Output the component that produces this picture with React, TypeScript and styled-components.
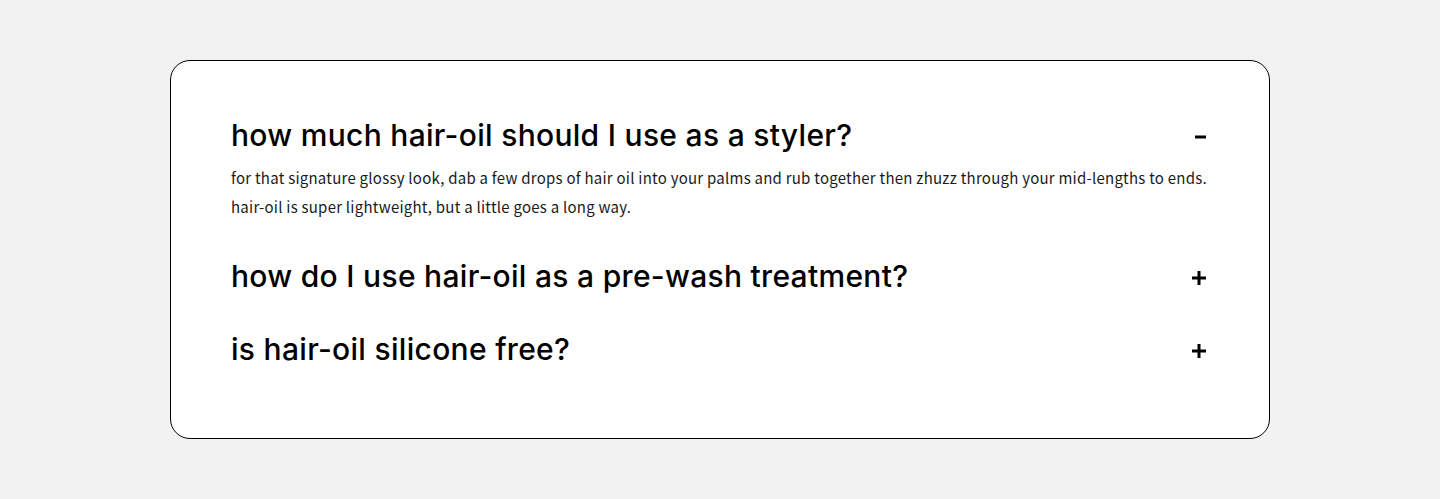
import React, { useState } from 'react';
import styled, { createGlobalStyle } from 'styled-components';

const GlobalStyle = createGlobalStyle`
    html, body {
        margin: 0;
        padding: 0;
        background: #f2f2f2;
    }
    body {
        font-family: "Noto Sans CJK JP", "Noto Sans", sans-serif;
        color: #000;
    }
`;

const Page = styled.div`
    padding: 60px 0 61px;
`;

const Card = styled.section`
    width: 1100px;
    box-sizing: border-box;
    margin: 0 auto;
    padding: 37.5px 60px 52px 60px;
    background: #fff;
    border: 1px solid #000;
    border-radius: 20px;
`;

const Item = styled.div`
    padding: 18.5px 0;
`;

const Question = styled.button`
    display: flex;
    align-items: center;
    justify-content: space-between;
    width: 100%;
    padding: 0;
    margin: 0;
    border: none;
    background: none;
    cursor: pointer;
    text-align: left;
    color: #000;
`;

const QuestionText = styled.h3`
    margin: 0;
    font-family: "Inter", "Lato", sans-serif;
    font-size: 30px;
    font-weight: 500;
    line-height: 36px;
    letter-spacing: 0.3px;
`;

const Toggle = styled.span`
    display: flex;
    align-items: center;
    justify-content: center;
    width: 16px;
    height: 16px;
    margin-right: 2px;
    margin-top: 4px;
`;

const Answer = styled.p`
    margin: 10px 0 0;
    font-size: 15px;
    line-height: 29px;
    letter-spacing: 0.24px;
    color: #1a1a1a;
`;

const faqs = [
    {
        q: 'how much hair-oil should I use as a styler?',
        a: (
            <>
                for that signature glossy look, dab a few drops of hair oil into your palms and rub together then zhuzz through your mid-lengths to ends.
                <br />
                hair-oil is super lightweight, but a little goes a long way.
            </>
        ),
    },
    {
        q: 'how do I use hair-oil as a pre-wash treatment?',
        a: 'apply a generous amount to dry hair from roots to ends, leave for at least 30 minutes, then shampoo and condition as usual.',
    },
    {
        q: 'is hair-oil silicone free?',
        a: 'yes, hair-oil is completely silicone free.',
    },
];

const Icon = ({ open }: { open: boolean }) => (
    <svg width="14" height="14" viewBox="0 0 14 14">
        {open ? (
            <rect x="3" y="5.5" width="11" height="3" fill="#000" />
        ) : (
            <>
                <rect x="0" y="5.5" width="14" height="3" fill="#000" />
                <rect x="5.5" y="0" width="3" height="14" fill="#000" />
            </>
        )}
    </svg>
);

const App: React.FC = () => {
    const [openIndex, setOpenIndex] = useState<number | null>(0);

    return (
        <>
            <GlobalStyle />
            <Page>
                <Card>
                    {faqs.map((f, i) => (
                        <Item key={i}>
                            <Question onClick={() => setOpenIndex(openIndex === i ? null : i)}>
                                <QuestionText>{f.q}</QuestionText>
                                <Toggle>
                                    <Icon open={openIndex === i} />
                                </Toggle>
                            </Question>
                            {openIndex === i && <Answer>{f.a}</Answer>}
                        </Item>
                    ))}
                </Card>
            </Page>
        </>
    );
};

export default App;
